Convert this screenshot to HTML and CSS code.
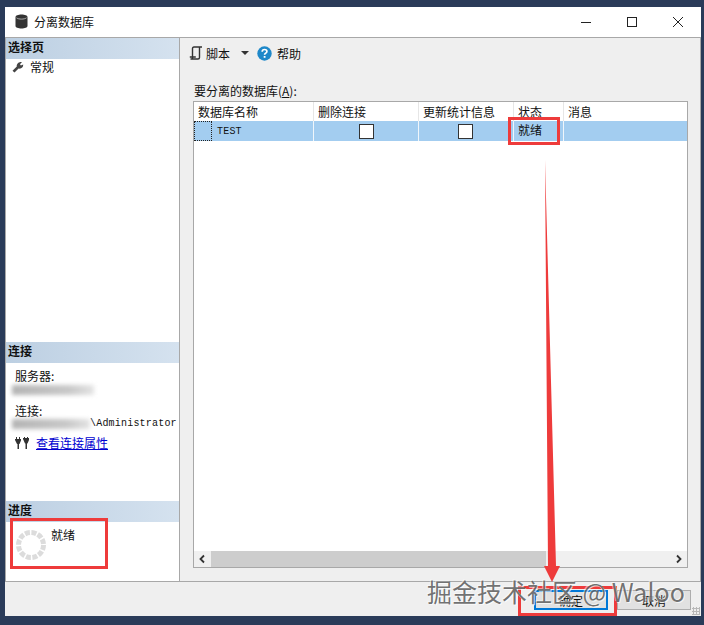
FILE: index.html
```html
<!DOCTYPE html>
<html lang="zh-CN">
<head>
  <meta charset="UTF-8" />
  <title>分离数据库</title>
  <link rel="stylesheet" href="styles.css">
</head>
<body>
  <div class="window">
    <div class="titlebar">
      <svg class="title-icon" width="13" height="15" viewBox="0 0 13 15"><path d="M.5 3c0-1.500 2.700-2.500 6-2.500s6 1 6 2.500v9c0 1.500-2.700 2.500-6 2.500s-6-1-6-2.500z" fill="#333"/><path d="M1.500 3.800c1 .9 3 1.300 5 1.300s4-.4 5-1.300" fill="none" stroke="#ddd" stroke-width=".7"/></svg>
      <span class="title-text">分离数据库</span>
      <div class="win-buttons">
        <svg width="12" height="12" viewBox="0 0 12 12"><path d="M1 6.500h10" stroke="#222" stroke-width="1"/></svg>
        <svg width="12" height="12" viewBox="0 0 12 12"><rect x="1.500" y="1.500" width="9" height="9" fill="none" stroke="#222"/></svg>
        <svg width="12" height="12" viewBox="0 0 12 12"><path d="M1 1l10 10M11 1L1 11" stroke="#222"/></svg>
      </div>
    </div>

    <div class="content">
      <div class="sidebar">
        <div class="section-head">选择页</div>
        <div class="page-item">
          <svg width="12" height="12" viewBox="0 0 12 12"><path d="M.5 9.800 4.800 5.600C4.300 3.200 6.500.6 10 1.100L8 3.200l.9 1.300 2.300-1C11.500 6.500 8.800 8.200 6.600 7.500L2.500 11.600z" fill="#444"/></svg>
          <span>常规</span>
        </div>
        <div class="sidebar-spacer"></div>

        <div class="section-head">连接</div>
        <div class="conn">
          <div class="conn-label">服务器:</div>
          <div class="conn-value"><i class="smudge smudge-server"></i></div>
          <div class="conn-label conn-label-gap">连接:</div>
          <div class="conn-value conn-value-user"><i class="smudge"></i><span class="mono">\Administrator</span></div>
          <div class="conn-link">
            <svg width="15" height="12" viewBox="0 0 15 12"><path d="M0 3V2h1V0h1v2h2V0h1v2h1v1.500L4.500 7H4v5H2.500V7H2zM8 2V1h1V0h1v1h2V0h1v1h1v2l-1.500 3.500H12V12h-1.500V6.500H10z" fill="#333"/></svg>
            <a href="#">查看连接属性</a>
          </div>
        </div>

        <div class="section-head">进度</div>
        <div class="progress">
          <svg class="spinner" width="32" height="32" viewBox="0 0 32 32"><circle cx="16" cy="16" r="12.500" fill="none" stroke="#dcdcdc" stroke-width="5" stroke-dasharray="5 1.550"/></svg>
          <span class="progress-text">就绪</span>
          <div class="mark mark-progress"></div>
        </div>
      </div>

      <div class="main">
        <div class="toolbar">
          <svg width="14" height="14" viewBox="0 0 14 14"><path d="M3.500 12V2.500c0-.8.500-1.500 1.500-1.500h8M3.500 12c0 .6-.5 1-1 1H1.500M10.500 1v10.500c0 .8-.6 1.500-1.500 1.500H2.500M.8 11h6" fill="none" stroke="#333" stroke-width="1.400"/></svg>
          <span class="tool-label">脚本</span>
          <span class="caret"></span>
          <svg class="help-icon" width="15" height="15" viewBox="0 0 15 15"><circle cx="7.500" cy="7.500" r="7.200" fill="#1e88c9"/><path d="M5.200 5.800c0-1.500 1.100-2.300 2.400-2.300s2.300.8 2.300 2c0 1.700-2.300 1.600-2.300 3.300" fill="none" stroke="#fff" stroke-width="1.700"/><rect x="6.700" y="10" width="1.800" height="1.800" fill="#fff"/></svg>
          <span class="tool-label help-label">帮助</span>
        </div>

        <div class="grid-label">要分离的数据库(<u>A</u>):</div>
        <div class="grid">
          <div class="row row-head">
            <div class="cell col-name">数据库名称</div>
            <div class="cell col-drop">删除连接</div>
            <div class="cell col-stats">更新统计信息</div>
            <div class="cell col-status">状态</div>
            <div class="cell col-msg">消息</div>
          </div>
          <div class="row row-selected">
            <div class="cell col-name"><span class="focus-box"></span><span class="mono">TEST</span></div>
            <div class="cell col-drop cell-center"><span class="checkbox"></span></div>
            <div class="cell col-stats cell-center"><span class="checkbox"></span></div>
            <div class="cell col-status">就绪<div class="mark mark-status"></div></div>
            <div class="cell col-msg"></div>
          </div>
          <div class="grid-empty"></div>
          <div class="scrollbar">
            <svg class="scroll-arrow" width="17" height="16" viewBox="0 0 17 16"><path d="M10 4.500 6.500 8l3.500 3.500" fill="none" stroke="#333" stroke-width="1.800"/></svg>
            <div class="scroll-track"><div class="scroll-thumb"></div></div>
            <svg class="scroll-arrow" width="17" height="16" viewBox="0 0 17 16"><path d="M7 4.500 10.500 8 7 11.500" fill="none" stroke="#333" stroke-width="1.800"/></svg>
          </div>
        </div>
      </div>
    </div>

    <div class="footer">
      <button class="btn btn-default">确定</button>
      <button class="btn btn-plain">取消</button>
      <div class="grip"></div>
    </div>
  </div>

  <!-- annotations painted on top of the screenshot -->
  <div class="mark mark-ok"></div>
  <svg class="arrow" width="20" height="423" viewBox="0 0 20 423"><path d="M4 0 7 406H3L11 422 19 406H15z" fill="#ee3b3b"/></svg>
  <div class="watermark">掘金技术社区 @ Waloo</div>
</body>
</html>
```
FILE: styles.css
```css
body {
  margin: 0;
  height: 625px;
  overflow: hidden;
  background: #2a3b59;
  font-family: "Noto Sans CJK SC", "Liberation Sans", sans-serif;
  font-size: 12px;
  color: #111;
}

.window {
  display: flex;
  flex-direction: column;
  height: 609px;
  margin: 7px 3px 0 5px;
  background: #efefef;
}

.titlebar {
  display: flex;
  align-items: center;
  height: 29px;
  padding-bottom: 1px;
  flex-shrink: 0;
  background: #fff;
  border-bottom: 1px solid #a8a8a8;
}

.title-icon {
  margin-left: 10px;
}

.title-text {
  margin-left: 6px;
}

.win-buttons {
  display: flex;
  gap: 34px;
  margin-left: auto;
  margin-right: 17px;
}

.content {
  display: flex;
  height: 543px;
  flex-shrink: 0;
  border-bottom: 1px solid #a8a8a8;
  border-left: 1px solid #a8a8a8;
  border-right: 1px solid #a8a8a8;
}

/* left column */
.sidebar {
  display: flex;
  flex-direction: column;
  width: 173px;
  flex-shrink: 0;
  background: #fff;
  border-right: 1px solid #a8a8a8;
}

.section-head {
  height: 21px;
  line-height: 18px;
  padding-left: 2px;
  font-weight: bold;
  background: linear-gradient(to right, #bccfe2, #d5e2ef);
}

.page-item {
  display: flex;
  align-items: center;
  gap: 6px;
  height: 15px;
  padding-left: 6px;
}

.sidebar-spacer {
  flex: 1;
}

.conn {
  height: 138px;
  padding: 4px 0 0 9px;
  box-sizing: border-box;
}

.conn-label {
  height: 17px;
  line-height: 17px;
}

.conn-label-gap {
  margin-top: 6px;
}

.conn-value {
  display: flex;
  align-items: center;
  height: 12px;
}

.conn-value-user {
  height: 9px;
}

.smudge {
  display: block;
  flex-shrink: 0;
  width: 78px;
  height: 10px;
  margin-left: -3px;
  background: linear-gradient(to right, #b4b4b4, #c8c8c8 70%, #e4e4e4);
  filter: blur(2px);
}

.smudge-server {
  width: 82px;
}

.mono {
  font-family: "Liberation Mono", monospace;
  font-size: 10px;
  letter-spacing: 0.2px;
}

.conn-link {
  display: flex;
  align-items: center;
  gap: 6px;
  margin-top: 6px;
}

.conn-link a {
  color: #0000d0;
}

.progress {
  position: relative;
  display: flex;
  height: 59px;
  padding: 6px 0 0 9px;
  gap: 4px;
  box-sizing: border-box;
}

.spinner {
  margin-top: 1px;
}

.progress-text {
  margin-top: -2px;
}

/* right column */
.main {
  flex: 1;
  display: flex;
  flex-direction: column;
  padding: 0 12px 13px 13px;
}

.toolbar {
  display: flex;
  align-items: center;
  height: 29px;
  padding-top: 1px;
  margin-left: -4px;
  box-sizing: border-box;
}

.tool-label {
  margin-left: 3px;
}

.help-label {
  margin-left: 5px;
}

.caret {
  width: 0;
  height: 0;
  margin-left: 11px;
  border-left: 4px solid transparent;
  border-right: 4px solid transparent;
  border-top: 4px solid #333;
}

.help-icon {
  margin-left: 8px;
}

.grid-label {
  height: 15px;
  margin: 16px 0 3px 1px;
  line-height: 15px;
}

.grid {
  flex: 1;
  display: flex;
  flex-direction: column;
  background: #fff;
  border: 1px solid #a8a8a8;
}

.row {
  display: flex;
  flex-shrink: 0;
}

.row-head {
  height: 19px;
}

.row-head .cell {
  padding-bottom: 1px;
}

.row-selected {
  height: 20px;
  background: #a3cdf0;
}

.cell {
  position: relative;
  display: flex;
  align-items: center;
  padding-left: 4px;
  box-sizing: border-box;
  border-right: 1px solid #e6e6e6;
}

.row-selected .cell {
  border-right-color: #f0f6fb;
}

.row-selected .col-status {
  padding-bottom: 3px;
}

.col-name {
  width: 120px;
}

.col-drop {
  width: 105px;
}

.col-stats {
  width: 95px;
}

.col-status {
  width: 50px;
}

.col-msg {
  flex: 1;
  border-right: none;
}

.cell-center {
  justify-content: center;
  padding-left: 0;
}

.focus-box {
  width: 18px;
  height: 20px;
  margin-left: -4px;
  margin-right: 5px;
  box-sizing: border-box;
  border: 1px dotted #222;
}

.checkbox {
  width: 13px;
  height: 13px;
  background: #fff;
  border: 1px solid #333;
}

.col-stats .checkbox {
  margin-right: 1px;
}

.grid-empty {
  flex: 1;
}

.scrollbar {
  display: flex;
  align-items: center;
  height: 16px;
  flex-shrink: 0;
  background: #f0f0f0;
}

.scroll-track {
  flex: 1;
}

.scroll-thumb {
  width: 335px;
  height: 16px;
  background: #cdcdcd;
}

/* bottom buttons */
.footer {
  position: relative;
  display: flex;
  justify-content: flex-end;
  gap: 9px;
  flex: 1;
  padding: 8px 10px 0 0;
}

.btn {
  width: 74px;
  height: 20px;
  padding: 0;
  font: inherit;
  color: #111;
  box-sizing: border-box;
}

.btn-default {
  background: #e1e1e1;
  border: 2px solid #0078d7;
}

.btn-plain {
  background: #e1e1e1;
  border: 1px solid #adadad;
}

.grip {
  position: absolute;
  right: 1px;
  bottom: 1px;
  width: 8px;
  height: 8px;
  background: radial-gradient(circle, #b8b8b8 1px, transparent 1.100px) 0 0 / 3px 3px;
}

/* annotations */
.mark {
  position: absolute;
  box-sizing: border-box;
  border: 3px solid #ee3b3b;
}

.mark-status {
  left: -6px;
  top: -4px;
  width: 52px;
  height: 28px;
}

.mark-progress {
  left: 4px;
  top: -4px;
  width: 98px;
  height: 51px;
}

.mark-ok {
  left: 518px;
  top: 586px;
  width: 99px;
  height: 30px;
}

.arrow {
  position: absolute;
  left: 541px;
  top: 160px;
}

.watermark {
  position: absolute;
  left: 427px;
  top: 573px;
  font-size: 25px;
  line-height: 36px;
  white-space: nowrap;
  color: rgba(90, 90, 90, 0.85);
  text-shadow: 1px 1px 0 rgba(255, 255, 255, 0.7), -1px -1px 0 rgba(255, 255, 255, 0.5);
}
```
